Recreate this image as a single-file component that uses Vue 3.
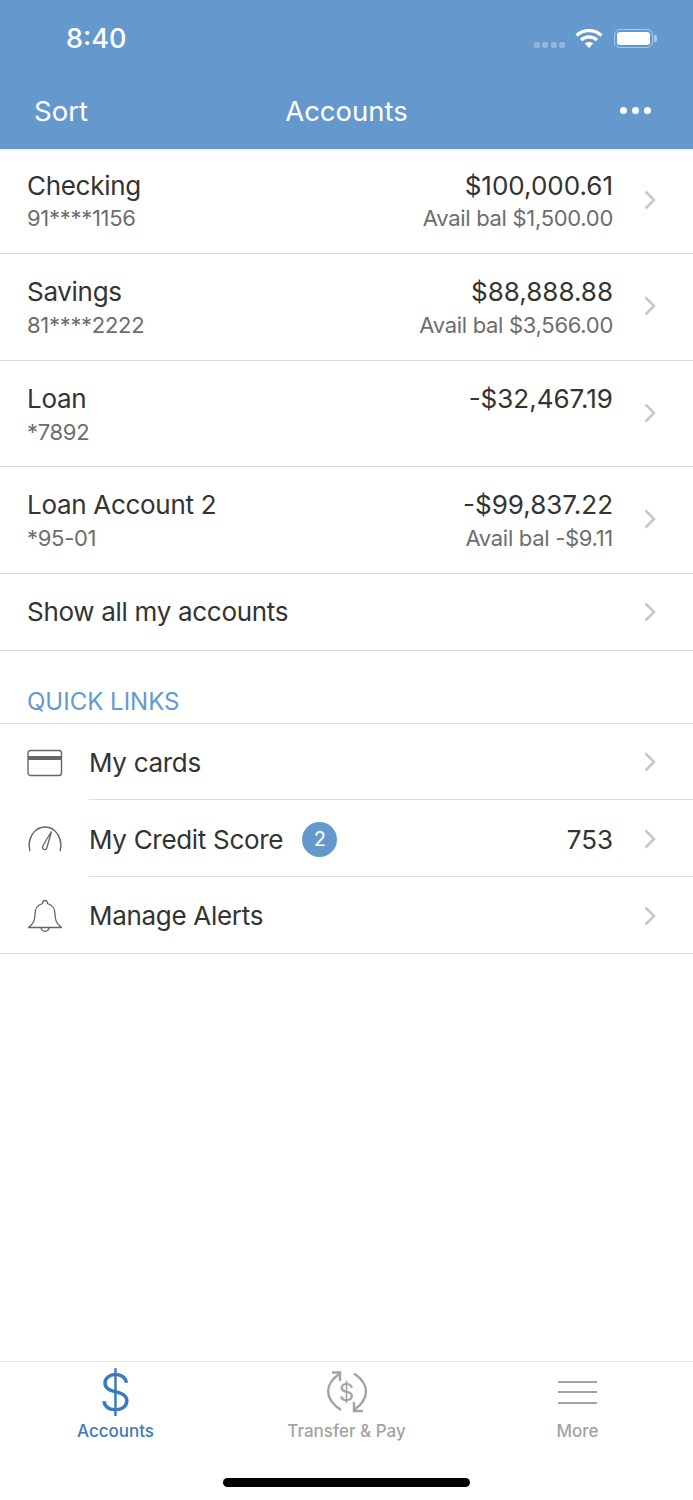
<template>
  <div class="screen">
    <header class="top">
      <div class="status">
        <span class="time">8:40</span>
        <div class="status-icons">
          <span class="signal"><i v-for="n in 4" :key="n"></i></span>
          <svg class="wifi" width="28" height="20" viewBox="0 0 28 20">
            <path d="M1.5 7.5C8.5 1 19.5 1 26.5 7.5" fill="none" stroke="#fff" stroke-width="3.2" />
            <path d="M6 12C10.5 7.8 17.5 7.8 22 12" fill="none" stroke="#fff" stroke-width="3.2" />
            <path d="M9.8 15.6L14 20L18.2 15.6C15.8 13.6 12.2 13.6 9.8 15.6Z" fill="#fff" />
          </svg>
          <span class="battery"><span class="battery-fill"></span></span>
          <span class="battery-cap"></span>
        </div>
      </div>
      <nav class="navbar">
        <span class="nav-left">Sort</span>
        <span class="nav-title">Accounts</span>
        <span class="dots"><i></i><i></i><i></i></span>
      </nav>
    </header>

    <main class="content">
      <section>
        <div v-for="acc in accounts" :key="acc.name" class="account">
          <div class="account-left">
            <div class="primary">{{ acc.name }}</div>
            <div class="secondary">{{ acc.number }}</div>
          </div>
          <div class="account-right">
            <div class="primary amount">{{ acc.amount }}</div>
            <div v-if="acc.avail" class="secondary">{{ acc.avail }}</div>
          </div>
          <svg class="chevron" width="12" height="20" viewBox="0 0 12 20"><path d="M1.5 1.5L10 10L1.5 18.5" /></svg>
        </div>
        <div class="show-all">
          <span class="primary">Show all my accounts</span>
          <svg class="chevron" width="12" height="20" viewBox="0 0 12 20"><path d="M1.5 1.5L10 10L1.5 18.5" /></svg>
        </div>
      </section>

      <h2 class="links-title">QUICK LINKS</h2>
      <section class="links">
        <div class="link">
          <svg class="link-icon" width="36" height="28" viewBox="0 0 36 28">
            <rect x="1" y="1.5" width="33.5" height="25" rx="2.5" fill="none" stroke="#666" stroke-width="1.4" />
            <rect x="1" y="7" width="33.5" height="4" fill="#666" />
          </svg>
          <div class="link-body">
            <span class="primary">My cards</span>
            <svg class="chevron" width="12" height="20" viewBox="0 0 12 20"><path d="M1.5 1.5L10 10L1.5 18.5" /></svg>
          </div>
        </div>
        <div class="link">
          <svg class="link-icon" width="36" height="28" viewBox="0 1 36 28">
            <path d="M3 26C-0.5 13 8 2 18 2C28 2 36.5 13 33 26" fill="none" stroke="#666" stroke-width="1.4" />
            <path d="M24.5 6.5L19.8 23C19 25.6 15.4 25 15.5 22.2C16.5 19.5 21 12 24.5 6.5Z" fill="none" stroke="#666" stroke-width="1.3" />
          </svg>
          <div class="link-body">
            <span class="primary">My Credit Score</span>
            <span class="badge">2</span>
            <span class="primary score">753</span>
            <svg class="chevron" width="12" height="20" viewBox="0 0 12 20"><path d="M1.5 1.5L10 10L1.5 18.5" /></svg>
          </div>
        </div>
        <div class="link">
          <svg class="link-icon" width="36" height="34" viewBox="0 0 36 34">
            <path d="M18 1.5C16 1.5 15.5 3 15.6 4.5C10.5 6 8 9.5 8 15C8 21.5 6.5 24.5 1.5 28.5H34.5C29.5 24.5 28 21.5 28 15C28 9.5 25.5 6 20.4 4.5C20.5 3 20 1.5 18 1.5Z" fill="none" stroke="#666" stroke-width="1.3" stroke-linejoin="round" />
            <path d="M14 28.5C14.5 33.5 21.5 33.5 22 28.5" fill="none" stroke="#666" stroke-width="1.3" />
          </svg>
          <div class="link-body">
            <span class="primary">Manage Alerts</span>
            <svg class="chevron" width="12" height="20" viewBox="0 0 12 20"><path d="M1.5 1.5L10 10L1.5 18.5" /></svg>
          </div>
        </div>
      </section>
    </main>

    <footer class="tabbar">
      <div class="tab active">
        <span class="tab-icon dollar">$</span>
        <span class="tab-label">Accounts</span>
      </div>
      <div class="tab">
        <span class="tab-icon transfer">
          <svg width="42" height="42" viewBox="0 0 42 42">
            <path d="M14 2.5C-2 13 -2 28 15 39" fill="none" stroke="#a3a3a3" stroke-width="2.4" />
            <path d="M6 1.5H14V10" fill="none" stroke="#a3a3a3" stroke-width="2.4" />
            <path d="M28 2.5C44 13 44 28 28 39" fill="none" stroke="#a3a3a3" stroke-width="2.4" />
            <path d="M37 40H28V31" fill="none" stroke="#a3a3a3" stroke-width="2.4" />
          </svg>
          <span class="transfer-sign">$</span>
        </span>
        <span class="tab-label">Transfer &amp; Pay</span>
      </div>
      <div class="tab">
        <span class="tab-icon lines"><i></i><i></i><i></i></span>
        <span class="tab-label">More</span>
      </div>
    </footer>
    <div class="home-area"><span class="home-bar"></span></div>
  </div>
</template>

<script setup>
const accounts = [
  { name: 'Checking', number: '91****1156', amount: '$100,000.61', avail: 'Avail bal $1,500.00' },
  { name: 'Savings', number: '81****2222', amount: '$88,888.88', avail: 'Avail bal $3,566.00' },
  { name: 'Loan', number: '*7892', amount: '-$32,467.19', avail: '' },
  { name: 'Loan Account 2', number: '*95-01', amount: '-$99,837.22', avail: 'Avail bal -$9.11' }
]
</script>

<style>
html,
body {
  margin: 0;
  background: #fff;
}
</style>

<style scoped>
.screen {
  width: 693px;
  height: 1500px;
  display: flex;
  flex-direction: column;
  overflow: hidden;
  background: #fff;
  font-family: Inter, Roboto, "Liberation Sans", sans-serif;
  color: #333;
}

.top {
  height: 149px;
  background: #6599cd;
  color: #fff;
  border-bottom: 1px solid #e4edf6;
  display: flex;
  flex-direction: column;
}
.status {
  height: 76px;
  display: flex;
  align-items: center;
  justify-content: space-between;
  padding: 0 36px 0 66px;
}
.time {
  font-size: 27px;
  line-height: 33px;
  font-weight: 500;
  margin-top: 1px;
}
.status-icons {
  display: flex;
  align-items: center;
}
.signal {
  display: flex;
  gap: 2.33px;
  margin-right: 10px;
  margin-top: 14px;
}
.signal i {
  width: 6px;
  height: 6px;
  border-radius: 2px;
  background: rgba(255, 255, 255, 0.3);
}
.wifi {
  margin-right: 11px;
}
.battery {
  width: 33px;
  height: 13px;
  padding: 2px;
  border: 1.5px solid rgba(255, 255, 255, 0.45);
  border-radius: 6px;
  display: flex;
}
.battery-fill {
  flex: 1;
  background: #fff;
  border-radius: 3px;
}
.battery-cap {
  width: 3px;
  height: 7px;
  margin-left: 1px;
  background: rgba(255, 255, 255, 0.45);
  border-radius: 0 2px 2px 0;
}
.navbar {
  height: 73px;
  box-sizing: border-box;
  display: flex;
  align-items: center;
  justify-content: space-between;
  padding: 0 42px 4px 34px;
  position: relative;
  font-size: 27.5px;
}
.nav-title {
  position: absolute;
  left: 0;
  right: 0;
  text-align: center;
}
.dots {
  display: flex;
  gap: 5px;
}
.dots i {
  width: 7px;
  height: 7px;
  border-radius: 50%;
  background: #fff;
}

.content {
  flex: 1;
}
.account {
  --row-top: 21px;
  height: 106.5px;
  box-sizing: border-box;
  border-bottom: 1px solid #dcdcdc;
  padding: 0 37px 0 27px;
  display: flex;
  align-items: flex-start;
}
.account:first-child {
  --row-top: 19px;
  height: 104px;
}
.account:not(:first-child) .secondary {
  margin-top: 1px;
}
.account-left,
.account-right {
  padding-top: var(--row-top);
}
.account-left {
  flex: 1;
}
.account-right {
  text-align: right;
  margin-right: 31px;
}
.primary {
  font-size: 26px;
  line-height: 33px;
  letter-spacing: -0.3px;
  color: #333;
}
.primary.amount {
  letter-spacing: 0;
}
.secondary {
  font-size: 22px;
  line-height: 32px;
  letter-spacing: -0.3px;
  color: #6d6d6d;
}
.account .chevron {
  margin-top: calc(var(--row-top) + 21px);
}
.chevron {
  flex: none;
}
.chevron path {
  fill: none;
  stroke: #c7c7cc;
  stroke-width: 2.6;
}
.show-all {
  height: 77px;
  box-sizing: border-box;
  border-bottom: 1px solid #dcdcdc;
  padding: 0 37px 0 27px;
  display: flex;
  align-items: center;
  justify-content: space-between;
}
.links-title {
  margin: 0;
  height: 73px;
  box-sizing: border-box;
  padding: 34px 0 0 27px;
  font-size: 24px;
  line-height: 33px;
  font-weight: 400;
  color: #6599cd;
  border-bottom: 1px solid #dcdcdc;
}
.link {
  display: flex;
  align-items: center;
  height: 76.7px;
  box-sizing: border-box;
  padding: 2px 0 0 27px;
}
.link-icon {
  width: 36px;
  flex: none;
  margin-right: 26px;
}
.link-body {
  flex: 1;
  height: 100%;
  box-sizing: border-box;
  border-bottom: 1px solid #dcdcdc;
  display: flex;
  align-items: center;
  padding-right: 37px;
}
.link-body .chevron {
  margin-left: auto;
}
.link:last-child {
  border-bottom: 1px solid #dcdcdc;
}
.link:last-child .link-body {
  border-bottom: none;
}
.badge {
  width: 35px;
  height: 35px;
  margin-left: 19px;
  border-radius: 50%;
  background: #6599cd;
  color: #fff;
  font-size: 20px;
  display: flex;
  align-items: center;
  justify-content: center;
}
.link-body .score {
  margin-left: auto;
  letter-spacing: 0;
}
.link-body .score + .chevron {
  margin-left: 31px;
}

.tabbar {
  height: 100px;
  box-sizing: border-box;
  border-top: 1px solid #e2e2e2;
  display: grid;
  grid-template-columns: 1fr 1fr 1fr;
}
.tab {
  display: flex;
  flex-direction: column;
  align-items: center;
  padding-top: 6px;
  color: #a3a3a3;
}
.tab.active {
  color: #3b7bbd;
}
.tab-icon {
  height: 48px;
  display: flex;
  align-items: center;
  justify-content: center;
  position: relative;
}
.dollar {
  font-size: 52px;
  font-weight: 350;
}
.transfer-sign {
  position: absolute;
  left: 0;
  right: 0;
  text-align: center;
  font-size: 24px;
}
.lines {
  flex-direction: column;
  gap: 8.5px;
}
.lines i {
  width: 39px;
  height: 2px;
  background: #a3a3a3;
}
.tab-label {
  font-size: 17px;
  line-height: 20px;
  font-weight: 500;
  margin-top: 5px;
}
.home-area {
  height: 39px;
  display: flex;
  justify-content: center;
  padding-top: 17px;
  box-sizing: border-box;
}
.home-bar {
  width: 247px;
  height: 9px;
  border-radius: 5px;
  background: #000;
}
</style>
